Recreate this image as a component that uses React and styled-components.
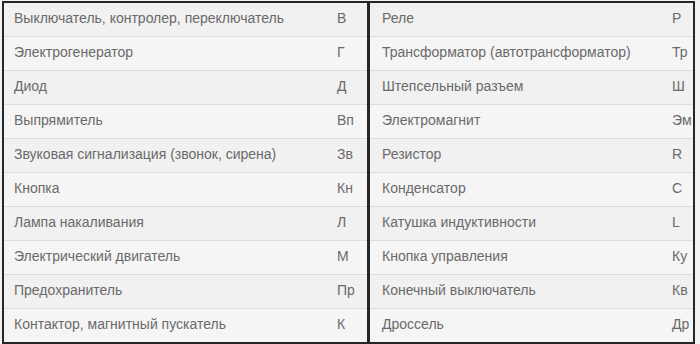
import React from "react";
import styled, { createGlobalStyle } from "styled-components";

const Global = createGlobalStyle`
  html, body { margin: 0; padding: 0; background: #f3f3f3; }
  body { font-family: "Liberation Sans", Arial, sans-serif; }
`;

const Page = styled.div`
  padding: 1px 5px 0 2px;
  width: 700px;
  height: 344px;
  box-sizing: border-box;
`;

const Tables = styled.div`
  display: grid;
  grid-template-columns: 363px 1fr;
  border: 2px solid #262626;
  background: #262626;
  column-gap: 3px;
`;

const Table = styled.div`
  display: flex;
  flex-direction: column;
  background: #f3f3f3;
`;

const Row = styled.div`
  display: grid;
  grid-template-columns: ${(p) => p.$cols};
  align-items: center;
  height: 33px;
  border-bottom: 1px solid #dcdcdc;
  background: ${(p) => (p.$alt ? "#f5f5f5" : "#f1f1f1")};
  &:last-child { border-bottom: none; }
`;

const Name = styled.div`
  padding-left: ${(p) => p.$pad}px;
  font-size: 14px;
  color: #6a6a6a;
  white-space: nowrap;
  margin-top: -3px;
`;

const Code = styled.div`
  font-size: 14px;
  color: #6a6a6a;
  margin-top: -3px;
`;

const left = [
  ["Выключатель, контролер, переключатель", "В"],
  ["Электрогенератор", "Г"],
  ["Диод", "Д"],
  ["Выпрямитель", "Вп"],
  ["Звуковая сигнализация (звонок, сирена)", "Зв"],
  ["Кнопка", "Кн"],
  ["Лампа накаливания", "Л"],
  ["Электрический двигатель", "М"],
  ["Предохранитель", "Пр"],
  ["Контактор, магнитный пускатель", "К"],
];

const right = [
  ["Реле", "Р"],
  ["Трансформатор (автотрансформатор)", "Тр"],
  ["Штепсельный разъем", "Ш"],
  ["Электромагнит", "Эм"],
  ["Резистор", "R"],
  ["Конденсатор", "С"],
  ["Катушка индуктивности", "L"],
  ["Кнопка управления", "Ку"],
  ["Конечный выключатель", "Кв"],
  ["Дроссель", "Др"],
];

export default function App() {
  return (
    <Page>
      <Global />
      <Tables>
        <Table>
          {left.map(([n, c], i) => (
            <Row key={n} $cols="333px 1fr" $alt={i % 2 === 1}>
              <Name $pad={10}>{n}</Name>
              <Code>{c}</Code>
            </Row>
          ))}
        </Table>
        <Table>
          {right.map(([n, c], i) => (
            <Row key={n} $cols="302px 1fr" $alt={i % 2 === 1}>
              <Name $pad={12}>{n}</Name>
              <Code>{c}</Code>
            </Row>
          ))}
        </Table>
      </Tables>
    </Page>
  );
}
